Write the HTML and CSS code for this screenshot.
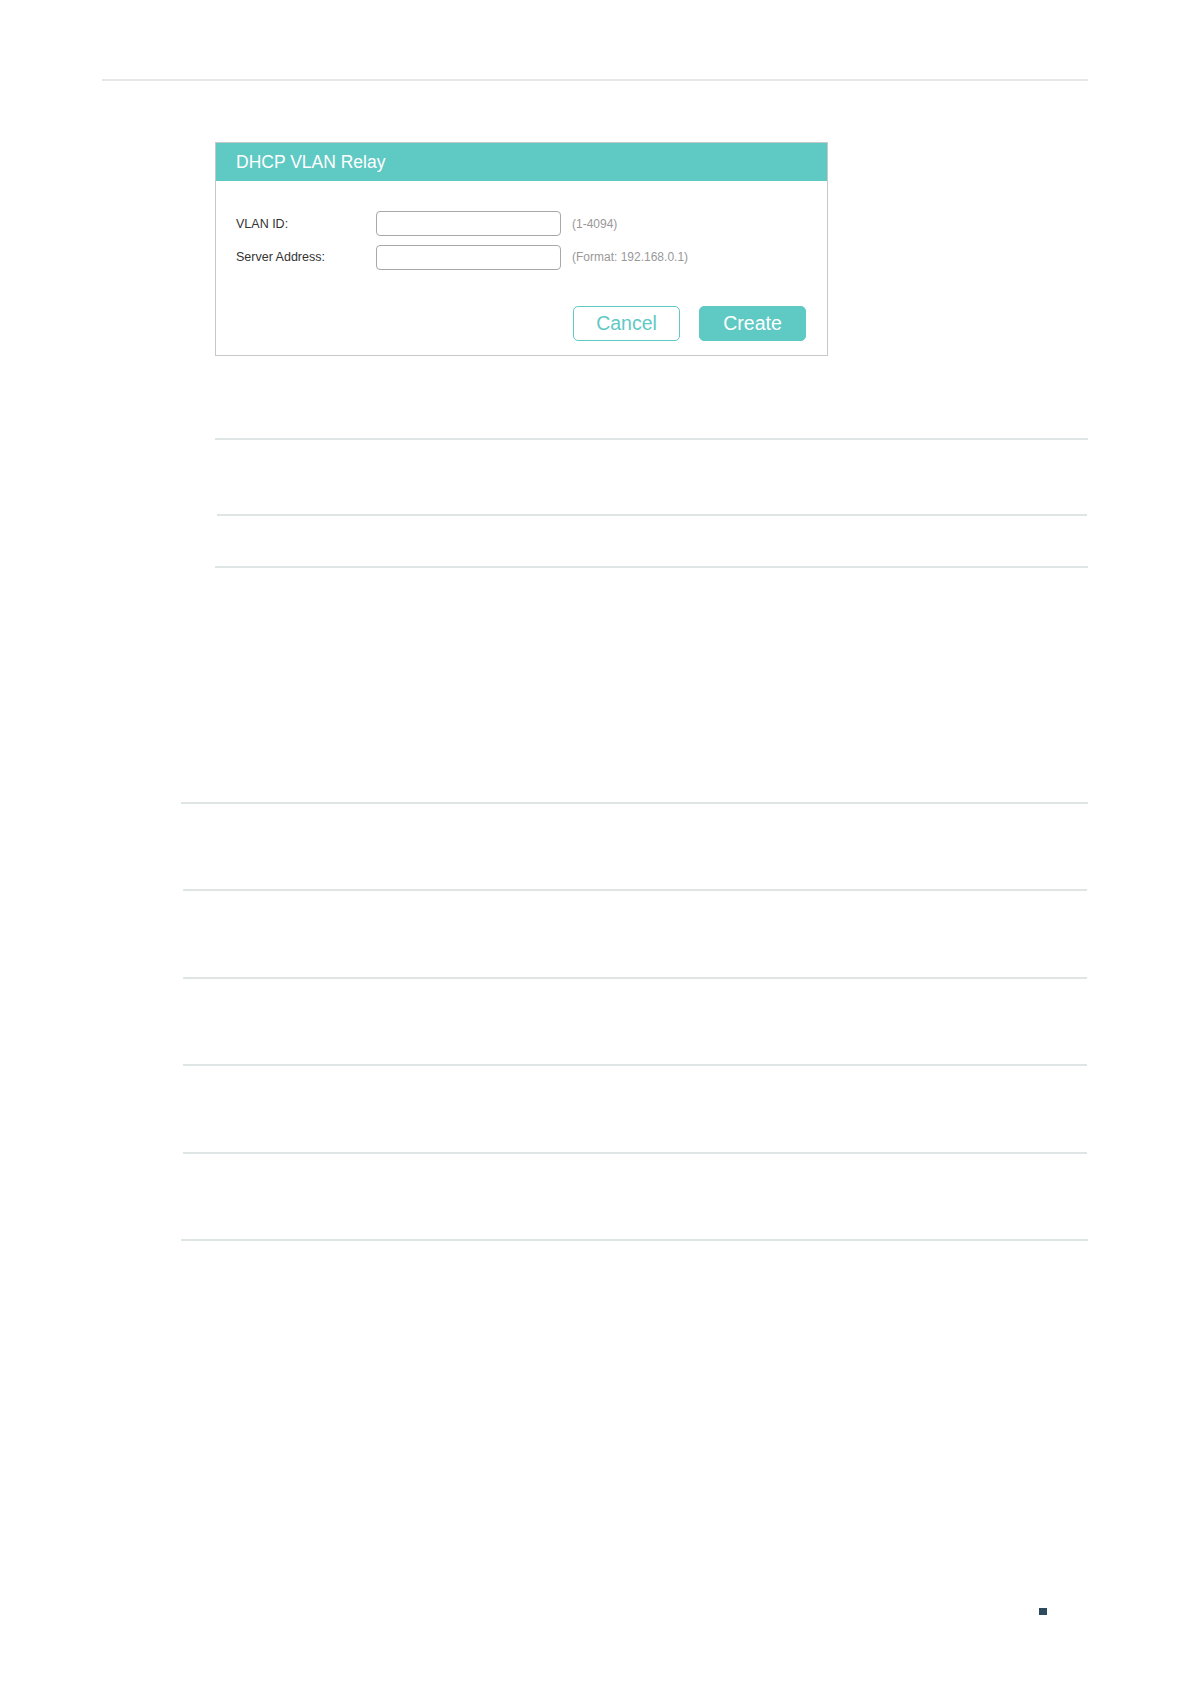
FILE: index.html
```html
<!DOCTYPE html>
<html lang="en">
<head>
  <meta charset="UTF-8" />
  <title>DHCP VLAN Relay</title>
  <link rel="stylesheet" href="styles.css">
</head>
<body>
  <div class="page">
    <div class="page-rule"></div>

    <div class="dialog">
      <div class="dialog-header">DHCP VLAN Relay</div>
      <div class="dialog-body">
        <div class="field">
          <label class="field-label" for="vlanId">VLAN ID:</label>
          <input class="field-input" type="text" id="vlanId">
          <span class="field-hint">(1-4094)</span>
        </div>
        <div class="field">
          <label class="field-label" for="serverAddr">Server Address:</label>
          <input class="field-input" type="text" id="serverAddr">
          <span class="field-hint">(Format: 192.168.0.1)</span>
        </div>
        <div class="dialog-actions">
          <button class="btn btn-outline" type="button">Cancel</button>
          <button class="btn btn-fill" type="button">Create</button>
        </div>
      </div>
    </div>

    <div class="table table-small">
      <div class="table-row row-tall"></div>
      <div class="table-row row-short inset"></div>
    </div>

    <div class="table table-big">
      <div class="table-row"></div>
      <div class="table-row inset"></div>
      <div class="table-row inset"></div>
      <div class="table-row inset"></div>
      <div class="table-row inset"></div>
    </div>

    <div class="page-footer">
      <span class="page-mark"></span>
    </div>
  </div>
</body>
</html>
```

FILE: styles.css
```css
/* Reset & Fonts */
* {
  box-sizing: border-box;
}

body {
  margin: 0;
  background: #fff;
  font-family: 'Liberation Sans', Arial, sans-serif;
  color: #333;
}

.page {
  padding: 79px 103px 40px 102px;
}

.page-rule {
  height: 2px;
  background: #e6e7e7;
}

/* Dialog */
.dialog {
  width: 613px;
  margin: 61px 0 0 113px;
  border: 1px solid #c9c9c9;
  background: #fff;
}

.dialog-header {
  height: 38px;
  padding-left: 20px;
  background: #5fc9c4;
  color: #fff;
  font-size: 17.5px;
  line-height: 38px;
}

.dialog-body {
  padding: 30px 21px 14px 20px;
}

.field {
  display: flex;
  align-items: center;
  height: 25px;
  margin-bottom: 8.5px;
}

.field-label {
  width: 140px;
  font-size: 12.5px;
  color: #333;
}

.field-input {
  width: 185px;
  height: 25px;
  border: 1px solid #a8a8a8;
  border-radius: 4px;
  background: #fff;
}

.field-hint {
  margin-left: 11px;
  font-size: 12px;
  color: #999;
}

.dialog-actions {
  display: flex;
  justify-content: flex-end;
  gap: 19px;
  margin-top: 36.5px;
}

.btn {
  width: 107px;
  height: 35px;
  border-radius: 5px;
  font-family: 'Liberation Sans', Arial, sans-serif;
  font-size: 19.5px;
  cursor: pointer;
}

.btn-outline {
  background: #fff;
  border: 1px solid #5fc9c4;
  color: #5fc9c4;
}

.btn-fill {
  background: #5fc9c4;
  border: 1px solid #5fc9c4;
  color: #fff;
}

/* Empty tables */
.table {
  border-bottom: 2px solid #dfe4e4;
}

.table-row {
  border-top: 2px solid #dfe4e4;
  height: 87.4px;
}

.table-row.inset {
  margin: 0 1px 0 2px;
}

.table-small {
  margin: 82px 0 0 113px;
}

.table-small .row-tall {
  height: 76px;
}

.table-small .row-short {
  height: 52px;
}

.table-big {
  margin: 234px 0 0 79px;
}

/* Footer */
.page-footer {
  display: flex;
  justify-content: flex-end;
  margin-top: 367px;
  padding-right: 41px;
}

.page-mark {
  width: 8px;
  height: 7px;
  background: #2d4b5c;
}
```
